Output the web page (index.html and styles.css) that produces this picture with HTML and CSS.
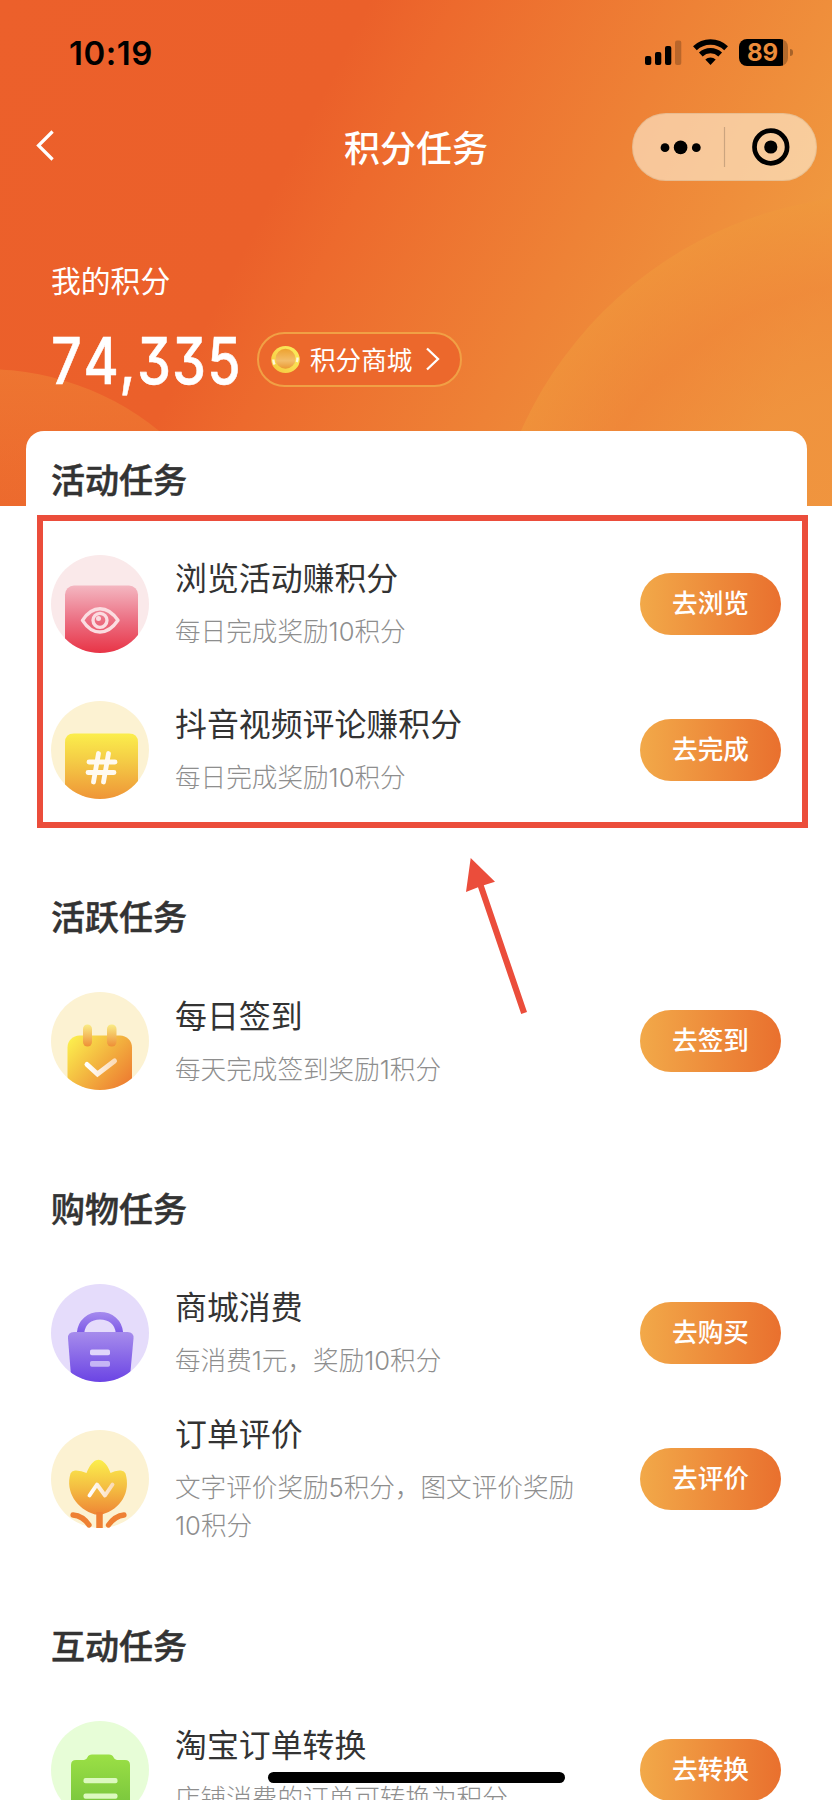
FILE: index.html
```html
<!DOCTYPE html>
<html lang="zh-CN">
<head>
<meta charset="utf-8">
<title>积分任务</title>
<link rel="stylesheet" href="styles.css">
</head>
<body>
<div class="screen">
  <header class="hero">
    <svg class="hero-bg" viewBox="0 0 832 506">
      <defs>
        <linearGradient id="heroLeft" x1="0" y1="0" x2="0" y2="1">
          <stop offset="0" stop-color="#f08a38" stop-opacity=".5"/>
          <stop offset=".28" stop-color="#f08a38" stop-opacity=".2"/>
          <stop offset=".5" stop-color="#f08a38" stop-opacity="0"/>
        </linearGradient>
        <radialGradient id="heroRight">
          <stop offset="0" stop-color="#ef8f3d" stop-opacity=".5"/>
          <stop offset=".5" stop-color="#ef8b3b" stop-opacity=".5"/>
          <stop offset=".78" stop-color="#ef8237" stop-opacity=".6"/>
          <stop offset="1" stop-color="#f0983c" stop-opacity=".6"/>
        </radialGradient>
      </defs>
      <circle cx="-15" cy="645" r="276" fill="url(#heroLeft)"/>
      <circle cx="885" cy="594" r="399" fill="url(#heroRight)"/>
    </svg>
    <div class="status">
      <span class="clock">10:19</span>
      <div class="status-icons">
        <svg width="37" height="28" viewBox="0 0 37 28">
          <rect x="0" y="17" width="6.3" height="9" rx="2"/>
          <rect x="10" y="13" width="6.3" height="13" rx="2"/>
          <rect x="20" y="7" width="6.3" height="19" rx="2"/>
          <rect x="30" y="1.5" width="6.3" height="24.5" rx="2" opacity=".22"/>
        </svg>
        <svg width="35" height="28" viewBox="0 0 35 28">
          <g fill="none" stroke="#000" stroke-width="5.4">
            <path d="M1.900 9.300a22.500 22.500 0 0 1 31.200 0"/>
            <path d="M7.800 15.500a14.200 14.200 0 0 1 19.400 0"/>
          </g>
          <path d="M17.500 26l-5.200-5.400a7.600 7.600 0 0 1 10.400 0z"/>
        </svg>
        <div class="battery"><span class="battery-level">89</span></div>
      </div>
    </div>
    <nav class="nav">
      <svg class="back" width="20" height="32" viewBox="0 0 20 32"><path d="M17.6 2.5L3.5 16.5l14.1 14" fill="none" stroke="#fff" stroke-width="3.2"/></svg>
      <h1 class="nav-title">积分任务</h1>
      <div class="capsule">
        <svg width="185" height="68" viewBox="0 0 185 68">
          <circle cx="33" cy="34.7" r="4.4"/><circle cx="48.6" cy="34.4" r="6.8"/><circle cx="64.3" cy="34.7" r="4.4"/>
          <path d="M92.500 14v40" stroke="#000" stroke-opacity=".18" stroke-width="1.2"/>
          <circle cx="138.8" cy="34" r="16.3" fill="none" stroke="#000" stroke-width="4.7"/>
          <circle cx="138.8" cy="34" r="6.6"/>
        </svg>
      </div>
    </nav>
    <div class="points">
      <p class="points-label">我的积分</p>
      <div class="points-row">
        <div class="points-box"><span class="points-value">74<span class="comma">,</span>335</span></div>
        <div class="mall">
          <svg width="29" height="29" viewBox="0 0 29 29">
            <defs>
              <linearGradient id="coinRim" x1="0" y1="1" x2="1" y2="0"><stop offset="0" stop-color="#f4c63e"/><stop offset=".5" stop-color="#f9dc50"/><stop offset="1" stop-color="#fbf05c"/></linearGradient>
              <linearGradient id="coinFace" x1="0" y1="0" x2="0" y2="1"><stop offset="0" stop-color="#eda22f"/><stop offset=".6" stop-color="#f3bd6a"/><stop offset="1" stop-color="#ea9a33"/></linearGradient>
            </defs>
            <ellipse cx="14.5" cy="14.5" rx="14.3" ry="13.6" fill="url(#coinRim)"/>
            <circle cx="14.5" cy="13.7" r="10" fill="url(#coinFace)"/>
            <path d="M2.3 14.5q.2 3 1.3 5M26.5 12.5q.2 2.500-.8 4.500" stroke="#fff8dc" stroke-width="2.400" fill="none"/>
          </svg>
          <span class="mall-text">积分商城</span>
          <svg width="14" height="24" viewBox="0 0 14 24"><path d="M1 1.500L12 12 1 22.500" fill="none" stroke="#fff" stroke-width="2.300"/></svg>
        </div>
      </div>
    </div>
  </header>

  <main class="card">
    <section class="section">
      <h2 class="section-title">活动任务</h2>
      <div class="task">
        <svg class="task-icon" viewBox="0 0 98 98">
          <defs>
            <clipPath id="disc"><circle cx="49" cy="49" r="49"/></clipPath>
            <linearGradient id="pink" gradientUnits="userSpaceOnUse" x1="0" y1="30" x2="0" y2="98"><stop offset="0" stop-color="#f4b8c2"/><stop offset=".5" stop-color="#ec7285"/><stop offset="1" stop-color="#e83446"/></linearGradient>
          </defs>
          <circle cx="49" cy="49" r="49" fill="#fae9ea"/>
          <rect x="14" y="30.500" width="73" height="80" rx="9" fill="url(#pink)" clip-path="url(#disc)"/>
          <g fill="none" stroke="#fbdde1">
            <path d="M31.500 65.300Q39 53.700 49 53.700T67 65.300Q59 77 49 77T31.500 65.300z" stroke-width="3.400" stroke-linejoin="round"/>
            <circle cx="49" cy="65.300" r="7" stroke-width="3.300"/>
          </g>
          <circle cx="47.500" cy="63.500" r="2.500" fill="#fbdde1"/>
        </svg>
        <div class="task-body"><h3 class="task-name">浏览活动赚积分</h3><p class="task-desc">每日完成奖励10积分</p></div>
        <button class="go">去浏览</button>
      </div>
      <div class="task">
        <svg class="task-icon" viewBox="0 0 98 98">
          <defs><linearGradient id="amber" x1="0" y1="0" x2="0" y2="1"><stop offset="0" stop-color="#fbee4c"/><stop offset=".45" stop-color="#f4c945"/><stop offset="1" stop-color="#ef9537"/></linearGradient></defs>
          <circle cx="49" cy="49" r="49" fill="#fcf2d2"/>
          <g clip-path="url(#disc)"><path d="M14 98V41.500q0-9 9-9h55q9 0 9 9V98z" fill="url(#amber)"/></g>
          <path d="M47.500 52.500L42.500 81M57.500 52.500L52.500 81M38 61h26M37 71.500h26" fill="none" stroke="#fffaf0" stroke-width="4.800" stroke-linecap="round"/>
        </svg>
        <div class="task-body"><h3 class="task-name">抖音视频评论赚积分</h3><p class="task-desc">每日完成奖励10积分</p></div>
        <button class="go">去完成</button>
      </div>
    </section>

    <section class="section">
      <h2 class="section-title">活跃任务</h2>
      <div class="task">
        <svg class="task-icon" viewBox="0 0 98 98">
          <defs>
            <linearGradient id="cal" gradientUnits="userSpaceOnUse" x1="20" y1="44" x2="76" y2="94"><stop offset="0" stop-color="#fcf04e"/><stop offset=".5" stop-color="#f3b540"/><stop offset="1" stop-color="#ed7c31"/></linearGradient>
            <linearGradient id="ring" x1="0" y1="0" x2="0" y2="1"><stop offset="0" stop-color="#faec86"/><stop offset="1" stop-color="#ee8f36"/></linearGradient>
            <linearGradient id="tick" x1="0" y1="0" x2="1" y2="0"><stop offset="0" stop-color="#fff"/><stop offset="1" stop-color="#fbdcb8"/></linearGradient>
          </defs>
          <circle cx="49" cy="49" r="49" fill="#fcf2d2"/>
          <g clip-path="url(#disc)"><rect x="16.500" y="43.500" width="64.500" height="70" rx="12" fill="url(#cal)"/></g>
          <rect x="32" y="32.500" width="9" height="22" rx="4.500" fill="url(#ring)"/>
          <rect x="56" y="32.500" width="9.500" height="22" rx="4.500" fill="url(#ring)"/>
          <path d="M36 72.500l10.500 9.500 17-13" fill="none" stroke="url(#tick)" stroke-width="5" stroke-linecap="round"/>
        </svg>
        <div class="task-body"><h3 class="task-name">每日签到</h3><p class="task-desc">每天完成签到奖励1积分</p></div>
        <button class="go">去签到</button>
      </div>
    </section>

    <section class="section">
      <h2 class="section-title">购物任务</h2>
      <div class="task">
        <svg class="task-icon" viewBox="0 0 98 98">
          <defs>
            <linearGradient id="bag" x1="0" y1="0" x2="0" y2="1"><stop offset="0" stop-color="#a68cec"/><stop offset="1" stop-color="#6b44e4"/></linearGradient>
            <linearGradient id="handle" gradientUnits="userSpaceOnUse" x1="0" y1="28" x2="0" y2="50"><stop offset="0" stop-color="#a58bee"/><stop offset="1" stop-color="#7a56e6"/></linearGradient>
          </defs>
          <circle cx="49" cy="49" r="49" fill="#e5dcfb"/>
          <path d="M29.500 50v-1C30.500 38 38.500 31.800 49 31.800S67.500 38 68.500 49v1" fill="none" stroke="url(#handle)" stroke-width="7.400"/>
          <g clip-path="url(#disc)"><path d="M23 48h53.500q6.500 0 6 6.500L78.500 98h-58L17 54.500q-.5-6.500 6-6.500z" fill="url(#bag)"/></g>
          <rect x="39" y="65.500" width="20" height="5.800" rx="1.800" fill="#e0d6fa"/>
          <rect x="39" y="77" width="20" height="5.800" rx="1.800" fill="#c5b5f5"/>
        </svg>
        <div class="task-body"><h3 class="task-name">商城消费</h3><p class="task-desc">每消费1元，奖励10积分</p></div>
        <button class="go">去购买</button>
      </div>
      <div class="task">
        <svg class="task-icon" viewBox="0 0 98 98">
          <defs><linearGradient id="tulip" gradientUnits="userSpaceOnUse" x1="0" y1="30" x2="0" y2="86"><stop offset="0" stop-color="#fbee4c"/><stop offset=".5" stop-color="#f4bd42"/><stop offset="1" stop-color="#ee8334"/></linearGradient></defs>
          <circle cx="49" cy="49" r="49" fill="#fcf2d2"/>
          <path d="M35.500 43C38 37 41 32 45 30.200q2.500-1 5 0C54 32 57.500 37 59.500 43q5-3 10.500-2.500 3.500.3 4.500 3C80 62 70 79 51 84.500h-7C26 79 14 62 19.500 43.500q1-2.700 4.500-3 6-.3 11.500 2.500z" fill="url(#tulip)"/>
          <path d="M38.500 65.500l7.500-11 8 11 7.500-11" fill="none" stroke="url(#tick)" stroke-width="3.900" stroke-linecap="round" stroke-linejoin="round"/>
          <path d="M48.500 82v16" fill="none" stroke="#ee8033" stroke-width="6.500"/>
          <path d="M22 85q10 1 16 10M73 85q-9 1-15.500 10" fill="none" stroke="#ee8033" stroke-width="5.300" stroke-linecap="round"/>
        </svg>
        <div class="task-body"><h3 class="task-name">订单评价</h3><p class="task-desc">文字评价奖励5积分，图文评价奖励10积分</p></div>
        <button class="go">去评价</button>
      </div>
    </section>

    <section class="section">
      <h2 class="section-title">互动任务</h2>
      <div class="task">
        <svg class="task-icon" viewBox="0 0 98 98">
          <defs><linearGradient id="green" x1="0" y1="0" x2="0" y2="1"><stop offset="0" stop-color="#9be045"/><stop offset="1" stop-color="#6cbb3a"/></linearGradient></defs>
          <circle cx="49" cy="49" r="49" fill="#e7fdd7"/>
          <g clip-path="url(#disc)"><path d="M25 39h8q2.500 0 3.500-2.700 1.200-2.800 4.500-2.800h17q3.300 0 4.500 2.800 1 2.700 3.500 2.700h8q5 0 5 5v61H20V44q0-5 5-5z" fill="url(#green)"/></g>
          <rect x="32.500" y="57" width="34" height="5.200" rx="2" fill="#dcf9bf"/>
          <rect x="32.500" y="72.500" width="34" height="5.200" rx="2" fill="#dcf9bf"/>
        </svg>
        <div class="task-body"><h3 class="task-name">淘宝订单转换</h3><p class="task-desc">店铺消费的订单可转换为积分</p></div>
        <button class="go">去转换</button>
      </div>
    </section>
  </main>

  <div class="highlight"></div>
  <svg class="arrow" width="64" height="158" viewBox="0 0 64 158"><path d="M6.700 1L31 24.800 19.800 28.300 63 155 57.200 157 14 30.200 2 35z" fill="#eb4d3b"/></svg>
  <div class="home-indicator"></div>
</div>
</body>
</html>
```
FILE: styles.css
```css
* { box-sizing: border-box; }
body { margin: 0; background: #fff; }
h1, h2, h3, p { margin: 0; font-weight: 400; }

.screen {
  position: relative;
  width: 832px;
  height: 1800px;
  overflow: hidden;
  background: #fff;
  font-family: "Noto Sans CJK SC", sans-serif;
  color: #333;
}

.hero {
  position: relative;
  height: 506px;
  background: linear-gradient(117deg, #ec602b 0%, #eb602a 34%, #ed6a2d 42%, #ee8236 64%, #f09c41 90%);
  color: #fff;
}
.hero-bg { position: absolute; left: 0; top: 0; width: 832px; height: 506px; }

.status {
  position: relative;
  display: flex;
  justify-content: space-between;
  align-items: flex-start;
  height: 113px;
  padding: 33px 39px 0 69px;
  color: #000;
}
.clock { font: 600 33px/40px Inter, sans-serif; letter-spacing: .5px; }
.status-icons { display: flex; align-items: flex-start; padding-top: 6px; }
.status-icons svg { margin-right: 11px; display: block; }
.battery {
  position: relative;
  width: 49px;
  height: 27px;
  margin: 0 5px 0 0;
  border-radius: 8px;
  background: linear-gradient(90deg, #000 44px, rgba(0,0,0,.25) 44px);
}
.battery::after {
  content: "";
  position: absolute;
  left: 51px;
  top: 10px;
  width: 3px;
  height: 7px;
  border-radius: 0 3px 3px 0;
  background: rgba(0,0,0,.3);
}
.battery-level {
  display: block;
  padding-right: 2px;
  text-align: center;
  font: 700 24px/27px Inter, sans-serif;
  color: #ee8c3a;
}

.nav {
  position: relative;
  display: grid;
  grid-template-columns: 185px 1fr 185px;
  align-items: center;
  height: 68px;
  padding: 0 15px;
}
.back { margin: -4px 0 0 20px; }
.nav-title { margin-top: -2px; text-align: center; font-size: 36px; line-height: 54px; font-weight: 500; }
.capsule {
  height: 68px;
  border-radius: 34px;
  background: rgba(255,246,226,.58);
  box-shadow: inset 0 0 0 1px rgba(140,120,90,.15);
}
.capsule svg { display: block; }

.points { position: relative; padding: 76px 51px 0; }
.points-label { font-size: 29.800px; line-height: 44px; }
.points-row { display: flex; align-items: center; margin-top: 28px; height: 60px; }
.points-box { width: 206px; padding-top: 3px; }
.points-value {
  display: inline-block;
  margin-left: -2px;
  font: 500 64px/60px Inter, sans-serif;
  font-feature-settings: "cv09", "tnum";
  transform: scaleX(.84);
  transform-origin: 0 50%;
  -webkit-text-stroke: .6px #fff;
}
.comma { margin: 0 3px 0 2px; }
.mall {
  display: flex;
  align-items: center;
  width: 205px;
  height: 55px;
  padding-left: 12px;
  border: 2px solid #f1a045;
  border-radius: 28px;
  background: #ec682c;
}
.mall-text { margin: -1px 14px 0 10px; font-size: 25.600px; line-height: 38px; }

.card {
  position: relative;
  width: 781px;
  height: 1369px;
  margin: -75px 0 0 26px;
  padding: 0 26px 0 25px;
  border-radius: 18px 18px 0 0;
  background: #fff;
}
.section { padding-top: 69px; }
.section:first-child { padding-top: 23px; }
.section-title { height: 77px; font-size: 34px; line-height: 50px; font-weight: 500; -webkit-text-stroke: .5px #333; }
.task { display: flex; align-items: center; height: 145.700px; }
.task-icon { flex: none; width: 98px; height: 98px; margin-right: 26px; }
.task-body { width: 410px; margin-right: auto; }
.task-name { margin-top: -2px; font-size: 31.900px; line-height: 45px; white-space: nowrap; }
.task-desc {
  margin-top: 14px;
  font-family: Inter, "Noto Sans CJK SC", sans-serif;
  font-size: 25.600px;
  line-height: 38.400px;
  font-weight: 300;
  color: #8e8e8e;
}
.go {
  width: 141px;
  height: 62px;
  padding: 0 0 4px;
  border: 0;
  border-radius: 31px;
  background: linear-gradient(90deg, #f2a949, #e9702e);
  font: 500 25.600px/38px "Noto Sans CJK SC", sans-serif;
  color: #fff;
}

.highlight {
  position: absolute;
  left: 37px;
  top: 515px;
  width: 771px;
  height: 313px;
  border: 6px solid #eb4d3b;
}
.arrow { position: absolute; left: 464px; top: 857px; }
.home-indicator {
  position: absolute;
  left: 268px;
  top: 1772px;
  width: 297px;
  height: 11px;
  border-radius: 6px;
  background: #000;
}
```
